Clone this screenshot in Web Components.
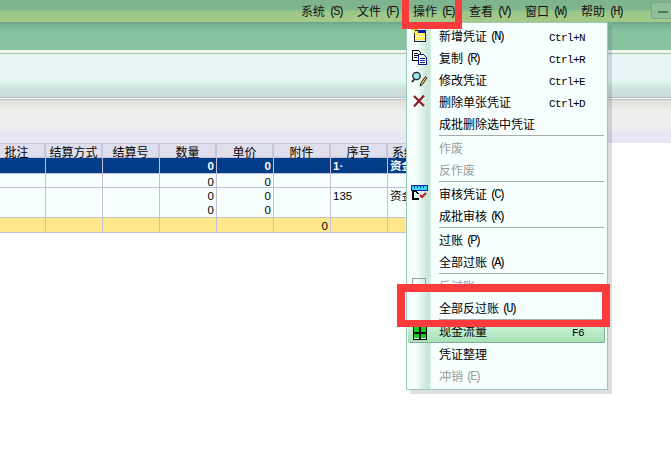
<!DOCTYPE html>
<html>
<head>
<meta charset="utf-8">
<style>
	html, body { margin: 0; padding: 0; background: #fff; }
	body { width: 671px; height: 449px; overflow: hidden; position: relative; font: 12px "Noto Sans CJK SC", sans-serif; color: #000; }
</style>
</head>
<body>
<erp-menubar>
	<erp-menu-title hotkey="S">系统</erp-menu-title>
	<erp-menu-title hotkey="F">文件</erp-menu-title>
	<erp-menu-title hotkey="E">操作</erp-menu-title>
	<erp-menu-title hotkey="V">查看</erp-menu-title>
	<erp-menu-title hotkey="W">窗口</erp-menu-title>
	<erp-menu-title hotkey="H">帮助</erp-menu-title>
</erp-menubar>
<erp-bands></erp-bands>
<voucher-grid></voucher-grid>

<popup-menu>
	<menu-row shortcut="Ctrl+N" hotkey="N">
		<svg slot="icon" width="16" height="16" viewBox="0 0 16 16" shape-rendering="crispEdges">
			<rect x="3.500" y="3.500" width="11" height="11" fill="#ffe95a" stroke="#222"/>
			<rect x="7" y="3" width="8" height="3" fill="#0a1f9a"/>
			<path d="M4 7h1v1H4zM6 7h1v1H6zM8 7h1v1H8zM10 7h1v1h-1zM12 7h1v1h-1zM5 9h1v1H5zM7 9h1v1H7zM9 9h1v1H9zM11 9h1v1h-1zM13 9h1v1h-1zM4 11h1v1H4zM6 11h1v1H6zM8 11h1v1H8zM10 11h1v1h-1zM12 11h1v1h-1zM5 13h1v1H5zM7 13h1v1H7zM9 13h1v1H9zM11 13h1v1h-1zM13 13h1v1h-1z" fill="#fff"/>
			<path d="M3 0h1v6H3zM0 2h7v1H0z" fill="#d4cc28"/>
		</svg>
		新增凭证
	</menu-row>
	<menu-row shortcut="Ctrl+R" hotkey="R">
		<svg slot="icon" width="16" height="16" viewBox="0 0 16 16" shape-rendering="crispEdges">
			<path d="M1.500 1.500h6l2 2v8h-8z" fill="#fff" stroke="#000"/>
			<path d="M3 4h4v1H3zM3 6h4v1H3zM3 8h3v1H3z" fill="#000"/>
			<path d="M7.500 5.500h5l3 3v7h-8z" fill="#fff" stroke="#0a1a80"/>
			<path d="M9 9h5v1H9zM9 11h5v1H9zM9 13h5v1H9z" fill="#0a1a80"/>
		</svg>
		复制
	</menu-row>
	<menu-row shortcut="Ctrl+E">
		<svg slot="icon" width="16" height="16" viewBox="0 0 16 16">
			<circle cx="5.500" cy="5" r="3.700" fill="#9fe8ea" stroke="#222" stroke-width="1.300"/>
			<path d="M3 8.500L1 11" stroke="#222" stroke-width="2"/>
			<path d="M14.500 5.500l-4.500 6.500-1 3 2.500-1.500 4.300-6.700z" fill="#f2d23c" stroke="#222"/>
		</svg>
		修改凭证
	</menu-row>
	<menu-row shortcut="Ctrl+D">
		<svg slot="icon" width="16" height="16" viewBox="0 0 16 16">
			<path d="M3 3l10 10M13 2.500L3 13.500" stroke="#8c1c22" stroke-width="2.200" fill="none"/>
		</svg>
		删除单张凭证
	</menu-row>
	<menu-row>成批删除选中凭证</menu-row>
	<menu-sep></menu-sep>
	<menu-row disabled>作废</menu-row>
	<menu-row disabled>反作废</menu-row>
	<menu-sep></menu-sep>
	<menu-row hotkey="C">
		<svg slot="icon" width="17" height="16" viewBox="0 0 17 16" shape-rendering="crispEdges">
			<rect x="0.500" y="0.500" width="16" height="5" fill="#35d8f0" stroke="#0a2aa8"/>
			<path d="M3 1h1v2H3zM6 1h1v2H6zM9 1h1v2H9zM12 1h1v2h-1z" fill="#0a2aa8"/>
			<path d="M1.500 6v8h6M1.500 6h3l3 3" fill="none" stroke="#000" stroke-width="2"/>
			<path d="M9 10l2 2 4-4" fill="none" stroke="#c01c28" stroke-width="2" shape-rendering="auto"/>
		</svg>
		审核凭证
	</menu-row>
	<menu-row hotkey="K">成批审核</menu-row>
	<menu-sep></menu-sep>
	<menu-row hotkey="P">过账</menu-row>
	<menu-row hotkey="A">全部过账</menu-row>
	<menu-sep></menu-sep>
	<menu-row disabled>
		<svg slot="icon" width="16" height="16" viewBox="0 0 16 16" shape-rendering="crispEdges">
			<rect x="1.500" y="1.500" width="13" height="12" fill="none" stroke="#9a9a9a"/>
		</svg>
		反过账
	</menu-row>
	<menu-row hotkey="U">全部反过账</menu-row>
	<menu-sep></menu-sep>
	<menu-row active shortcut="F6">
		<svg slot="icon" width="16" height="18" viewBox="0 0 16 18" shape-rendering="crispEdges">
			<rect x="2" y="0" width="14" height="18" fill="#000"/>
			<rect x="3" y="1" width="12" height="16" fill="#fff"/>
			<path d="M8 1h2v16H8zM3 10h12v2H3z" fill="#000"/>
			<path d="M3 5h5v5H3zM10 5h5v5h-5zM3 12h5v4H3zM10 12h5v4h-5z" fill="#0fd01c"/>
		</svg>
		现金流量
	</menu-row>
	<menu-row>凭证整理</menu-row>
	<menu-row disabled hotkey="E">冲销</menu-row>
</popup-menu>

<mark-box style="left:402px;top:-7px;width:60px;height:36px;border-width:7px"></mark-box>
<mark-box style="left:397px;top:284px;width:213px;height:43px"></mark-box>

<script>
const LATIN = `"Liberation Mono", monospace`;

class ErpMenubar extends HTMLElement {
	constructor() {
		super();
		this.attachShadow({ mode: "open" }).innerHTML = `
			<style>
				:host {
					display: flex;
					justify-content: flex-end;
					align-items: center;
					height: 22px;
					background: linear-gradient(#7db48f 0, #7fb68f 9px, #9cc68a 12px, #a4ca88 21px, #a8c88c 22px);
				}
				.titles { display: flex; gap: 16px; margin-right: 30px; }
				.min {
					box-sizing: border-box;
					width: 20px;
					height: 17px;
					margin-top: -1px;
					background: #8fc09a;
					border: 1px solid #78ac88;
					border-right: 0;
					border-radius: 3px 0 0 3px;
					display: flex;
					align-items: center;
					padding-left: 6px;
				}
				.min i { display: block; width: 10px; height: 2px; margin-top: 3px; background: #4a7c52; }
			</style>
			<div class="titles"><slot></slot></div>
			<div class="min"><i></i></div>
		`;
	}
}

class ErpMenuTitle extends HTMLElement {
	constructor() {
		super();
		this.attachShadow({ mode: "open" });
	}

	connectedCallback() {
		this.shadowRoot.innerHTML = `
			<style>
				:host { display: flex; align-items: center; width: 40px; height: 16px; line-height: 16px; white-space: nowrap; color: #111; }
				span { font: 12px/16px ${LATIN}; letter-spacing: -3px; margin: 2px 0 0 4px; }
			</style>
			<slot></slot><span>(`+this.getAttribute("hotkey")+`)</span>
		`;
	}
}

class ErpBands extends HTMLElement {
	constructor() {
		super();
		this.attachShadow({ mode: "open" }).innerHTML = `
			<style>
				:host { display: block; }
				.green { height: 28px; background: linear-gradient(#6ca68a 0, #7ab596 4px, #86c3a0 9px, #88c4a0 28px); }
				.white { height: 3px; background: #eef6ee; border-bottom: 1px solid #a8c6a8; }
				.pale {
					height: 43px;
					background: linear-gradient(#e6f6f6 0, #e6f6f6 26px, #dcf8ea 27px, #dcf6ea 29px, #d0e6e2 33px, #c8d8d8 43px);
					border-bottom: 1px solid #a8bcc4;
				}
				.gap { height: 1px; background: #fbfbfb; border-bottom: 1px solid #b8c4c4; }
				.grey {
					height: 43px;
					background: linear-gradient(#e2e0da 0, #e8e6e2 6px, #eeeeee 11px, #eeeeee 31px, #e8e6f4 32px, #e8e6f4 43px);
				}
			</style>
			<div class="green"></div>
			<div class="white"></div>
			<div class="pale"></div>
			<div class="gap"></div>
			<div class="grey"></div>
		`;
	}
}

class VoucherGrid extends HTMLElement {
	constructor() {
		super();
		this.shadow = this.attachShadow({ mode: "open" });
	}

	connectedCallback() {
		this.render();
	}

	render() {
		const heads = ["批注", "结算方式", "结算号", "数量", "单价", "附件", "序号", "系统"];
		const rows = [
			{ cls: "sel", h: 15, cells: ["", "", "", "0", "0", "", "1·", "资金"] },
			{ cls: "", h: 13, cells: ["", "", "", "0", "0", "", "", ""] },
			{ cls: "", h: 29, cells: ["", "", "", "0<br>0", "0<br>0", "", "135", "资金"] },
			{ cls: "sum", h: 14, cells: ["", "", "", "", "", "0", "", ""] }
		];
		let body = "";
		for (let i in rows) {
			let r = rows[i];
			body += `<div class="row `+r.cls+`" style="grid-template-rows:`+r.h+`px">`;
			for (let j in r.cells) {
				let left = j >= 6;
				body += `<div class="cell `+(left ? "l" : "r")+`">`+r.cells[j]+`</div>`;
			}
			body += `</div>`;
		}
		this.shadow.innerHTML = `
			<style>
				:host { display: block; width: 418px; margin-left: -11px; }
				.row {
					display: grid;
					grid-template-columns: repeat(8, 57px);
					border-bottom: 1px solid #c4c0d8;
				}
				.head { height: 13px; background: #dedeec; border-top: 1px solid #c8c8d4; }
				.head div {
					box-sizing: border-box;
					border-right: 2px solid #c8c6dc;
					text-align: center;
					line-height: 15px;
					height: 13px;
					white-space: nowrap;
				}
				.head div:last-child { text-align: left; padding-left: 4px; border-right: 0; }
				.cell {
					box-sizing: border-box;
					border-right: 1px solid #c4c0d8;
					background: #f6fffe;
					padding: 1px 2px 0;
					font: 11.500px/14px "Liberation Sans", "Noto Sans CJK SC", sans-serif;
					white-space: nowrap;
				}
				.r { text-align: right; }
				.l { text-align: left; }
				.sel .cell { background: #033c88; color: #fff; font-weight: bold; }
				.sum .cell { background: #ffe88c; }
			</style>
			<div class="row head">`+heads.map(h => `<div>`+h+`</div>`).join("")+`</div>
			`+body+`
		`;
	}
}

class PopupMenu extends HTMLElement {
	constructor() {
		super();
		this.attachShadow({ mode: "open" }).innerHTML = `
			<style>
				:host {
					position: absolute;
					left: 406px;
					top: 22px;
					box-sizing: border-box;
					width: 202px;
					height: 368px;
					border: 1px solid #9cc8b8;
					box-shadow: 4px 4px 0 rgba(70, 70, 110, .18);
					background:
						linear-gradient(90deg, #f6fffe 0, #f6fffe 9px, #c6e6d6 21px, #d8f0e6 24px, transparent 24px),
						#f6fffe;
					padding: 2px 0;
				}
			</style>
			<slot></slot>
		`;
	}
}

class MenuRow extends HTMLElement {
	constructor() {
		super();
		this.attachShadow({ mode: "open" });
	}

	connectedCallback() {
		let key = this.getAttribute("hotkey");
		let cut = this.getAttribute("shortcut");
		this.shadowRoot.innerHTML = `
			<style>
				:host {
					display: flex;
					align-items: center;
					box-sizing: border-box;
					height: 22px;
					padding-bottom: 2px;
					margin: 0 2px 0 1px;
					white-space: nowrap;
				}
				:host([disabled]) { color: #9c9c9c; }
				:host([active]) {
					background: linear-gradient(#d2f8de, #a6e0b8);
					border-bottom: 1px solid #7fae8c;
					border-right: 1px solid #7fae8c;
					border-radius: 0 0 2px 2px;
				}
				.icon { flex: none; width: 31px; padding-left: 3px; box-sizing: border-box; display: flex; align-items: center; }
				.key { font: 12px ${LATIN}; letter-spacing: -3px; margin: 4px 0 0 3px; }
				.cut { margin: 5px 20px 0 auto; font: 11px ${LATIN}; letter-spacing: -.6px; }
			</style>
			<div class="icon"><slot name="icon"></slot></div>
			<slot></slot>`+(key ? `<span class="key">(`+key+`)</span>` : ``)+(cut ? `<span class="cut">`+cut+`</span>` : ``);
	}
}

class MenuSep extends HTMLElement {
	constructor() {
		super();
		this.attachShadow({ mode: "open" }).innerHTML = `
			<style>
				:host { display: block; height: 2px; margin-left: 32px; margin-right: 3px; }
				div { height: 1px; background: #a8aca8; }
			</style>
			<div></div>
		`;
	}
}

class MarkBox extends HTMLElement {
	constructor() {
		super();
		this.attachShadow({ mode: "open" }).innerHTML = `
			<style>
				:host { position: absolute; box-sizing: border-box; border: 8px solid #fb3a3c; border-bottom-width: 7px; }
			</style>
		`;
	}
}

customElements.define("erp-menubar", ErpMenubar);
customElements.define("erp-menu-title", ErpMenuTitle);
customElements.define("erp-bands", ErpBands);
customElements.define("voucher-grid", VoucherGrid);
customElements.define("popup-menu", PopupMenu);
customElements.define("menu-row", MenuRow);
customElements.define("menu-sep", MenuSep);
customElements.define("mark-box", MarkBox);
</script>
</body>
</html>
